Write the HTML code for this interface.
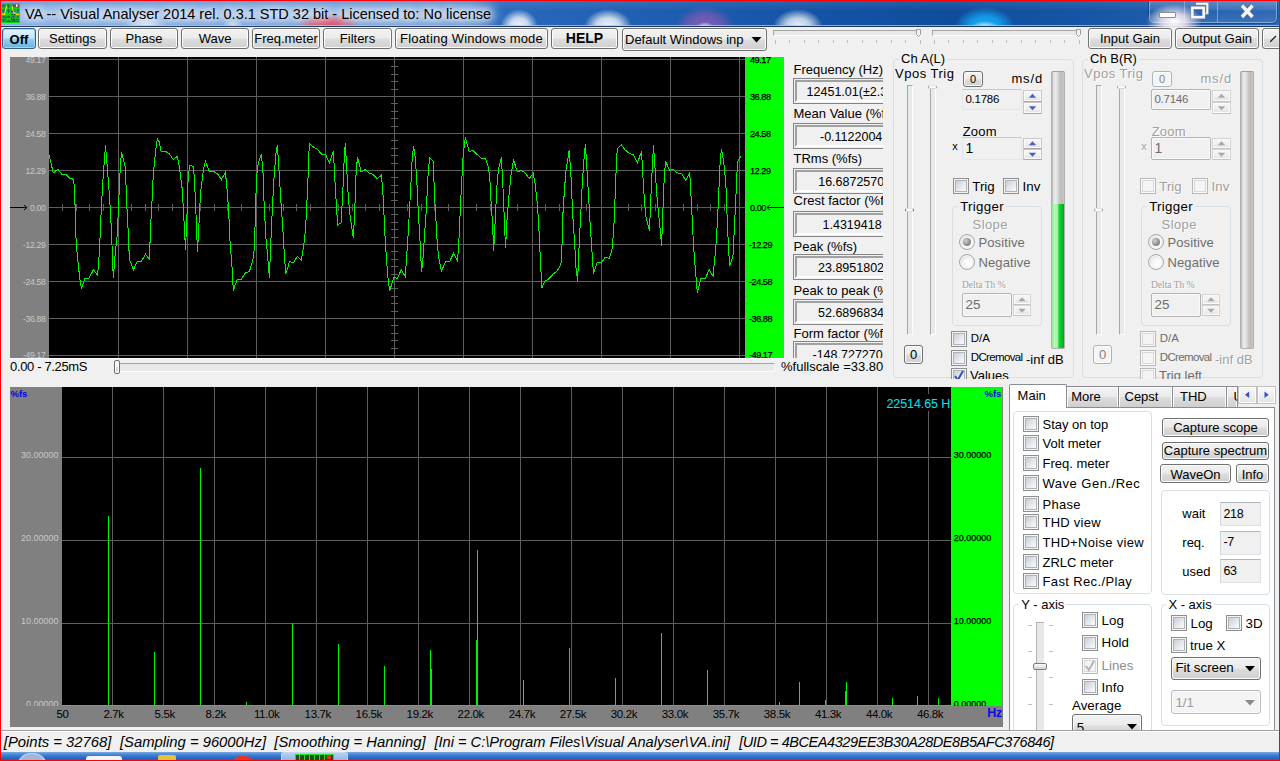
<!DOCTYPE html><html><head><meta charset="utf-8"><title>VA</title><style>
html,body{margin:0;padding:0}
body{width:1280px;height:761px;overflow:hidden;background:#f0f0f0;position:relative;font-family:"Liberation Sans",sans-serif;font-size:13px;color:#000}
div,span,svg{position:absolute;box-sizing:border-box}
.t{white-space:pre;line-height:16px;height:16px}
.btn{border:1px solid #707070;border-radius:3px;background:linear-gradient(#f2f2f2 0%,#ebebeb 48%,#dddddd 52%,#cfcfcf 100%);box-shadow:inset 0 0 0 1px #fcfcfc;text-align:center;white-space:pre}
.grp{border:1px solid #d5dfe5;border-radius:4px}
.cb{width:16px;height:16px;border:1px solid #8e8f8f;background:linear-gradient(135deg,#c9ced6 15%,#e4e7ea 50%,#fafafa 85%);box-shadow:inset 0 0 0 1px #f4f4f4, inset 0 0 0 2px #aeb3b9}
.cb.dis{border-color:#b8b8b8;box-shadow:inset 0 0 0 1px #f8f8f8, inset 0 0 0 2px #d8d8d8;background:#f4f4f4}
.rb{width:16px;height:16px;border:1px solid #a8a8a8;border-radius:50%;background:radial-gradient(circle at 60% 60%,#ffffff 0,#f4f4f4 45%,#dcdcdc 75%,#c8c8c8 100%);box-shadow:inset 0 0 0 1px #f4f4f4}
.emb{color:#a0a0a0;text-shadow:1px 1px 0 #fff}
.dk{color:#6d6d6d}
.inp3{border:1px solid #dde1e8;border-top-color:#b0b5be;border-left-color:#d0d4dc;background:#f0f0f0}
.inpd{border:1px solid #b4b4b4;border-radius:2px;background:#f0f0f0;box-shadow:inset 0 0 0 1px #fafafa}
.inp{border:1px solid #abadb3;background:#fff;border-color:#abadb3 #dbdfe6 #e3e9ef #e2e3ea}
.dis{color:#8c8c8c}
.inp2{border:1px solid #e2e6ec;border-top-color:#c4c8d0;border-radius:1px;background:#f0f0f0}
.sunk{border:1px solid #858585;background:#f0f0f0;overflow:hidden}
.sunk i{position:absolute;left:1px;top:1px;right:1px;bottom:1px;border:2px solid;border-color:#a0a0a0 #fff #fff #a0a0a0}
</style></head><body>
<div style="left:0;top:0;width:1280px;height:27px;overflow:hidden;background:
linear-gradient(rgba(255,255,255,.10) 0,rgba(255,255,255,0) 40%),
linear-gradient(90deg,#4580cc 0px,#3a76c6 400px,#2867ba 520px,#1f5eb0 650px,#1554a6 800px,#0f4c9c 950px,#1655a5 1080px,#2a66b4 1280px)">
<div style="left:-20px;top:7px;width:515px;height:15px;background:#fff;opacity:.55;filter:blur(6px);border-radius:9px"></div>
<div style="left:-20px;top:2px;width:500px;height:30px;background:#cfe0f8;opacity:.38;filter:blur(9px)"></div>
<div style="left:0;top:0;width:1280px;height:27px;background:
radial-gradient(ellipse 22px 12px at 146px 27px,rgba(255,255,255,.9),rgba(255,255,255,0) 100%),
radial-gradient(ellipse 10px 9px at 233px 27px,rgba(255,255,255,.8),rgba(255,255,255,0) 100%),
radial-gradient(ellipse 34px 15px at 328px 28px,rgba(240,70,80,.95),rgba(240,80,90,.7) 50%,rgba(240,70,80,0) 100%),
radial-gradient(ellipse 19px 18px at 519px 27px,rgba(255,255,255,.95),rgba(255,255,255,.75) 50%,rgba(255,255,255,0) 100%),
radial-gradient(ellipse 24px 18px at 608px 27px,rgba(255,255,255,.95),rgba(255,255,255,.75) 50%,rgba(255,255,255,0) 100%),
radial-gradient(ellipse 9px 5px at 705px 27px,rgba(255,255,255,.9),rgba(255,255,255,0) 100%),
radial-gradient(ellipse 30px 21px at 705px 27px,rgba(130,95,185,.95),rgba(120,90,180,.8) 55%,rgba(110,90,175,0) 100%),
radial-gradient(ellipse 25px 18px at 798px 27px,rgba(255,255,255,.95),rgba(255,255,255,.7) 50%,rgba(255,255,255,0) 100%),
radial-gradient(ellipse 14px 6px at 985px 27px,rgba(255,255,255,.9),rgba(255,255,255,0) 100%),
radial-gradient(ellipse 30px 19px at 985px 26px,rgba(20,170,245,1),rgba(20,170,245,.8) 50%,rgba(20,170,245,0) 100%)"></div>
</div>
<div style="left:0;top:25px;width:1280px;height:1px;background:rgba(170,200,240,.75)"></div>
<div style="left:0;top:26px;width:1280px;height:1px;background:#1c3a66"></div>
<svg style="left:1px;top:3px" width="19" height="20" viewBox="0 0 19 20">
<rect x="0" y="0" width="19" height="20" fill="#00e000"/>
<g fill="#5a78dc"><rect x="1.2" y="1.2" width="3.4" height="3.4"/><rect x="1.2" y="5.8" width="3.4" height="4.0"/><rect x="1.2" y="12.6" width="3.4" height="2.6"/><rect x="1.2" y="17.0" width="3.4" height="1.6"/><rect x="5.8" y="1.2" width="3.6" height="3.4"/><rect x="5.8" y="5.8" width="3.6" height="4.0"/><rect x="5.8" y="12.6" width="3.6" height="2.6"/><rect x="5.8" y="17.0" width="3.6" height="1.6"/><rect x="10.8" y="1.2" width="3.6" height="3.4"/><rect x="10.8" y="5.8" width="3.6" height="4.0"/><rect x="10.8" y="12.6" width="3.6" height="2.6"/><rect x="10.8" y="17.0" width="3.6" height="1.6"/><rect x="15.6" y="1.2" width="2.4" height="3.4"/><rect x="15.6" y="5.8" width="2.4" height="4.0"/><rect x="15.6" y="12.6" width="2.4" height="2.6"/><rect x="15.6" y="17.0" width="2.4" height="1.6"/></g>
<g stroke="#0a7a1a" stroke-width=".9"><path d="M2.9 1.2V4.6M1.2 2.9H4.6"/><path d="M2.9 5.8V9.8M1.2 7.8H4.6"/><path d="M2.9 12.6V15.2M1.2 13.9H4.6"/><path d="M2.9 17.0V18.6M1.2 17.8H4.6"/><path d="M7.6 1.2V4.6M5.8 2.9H9.4"/><path d="M7.6 5.8V9.8M5.8 7.8H9.4"/><path d="M7.6 12.6V15.2M5.8 13.9H9.4"/><path d="M7.6 17.0V18.6M5.8 17.8H9.4"/><path d="M12.6 1.2V4.6M10.8 2.9H14.4"/><path d="M12.6 5.8V9.8M10.8 7.8H14.4"/><path d="M12.6 12.6V15.2M10.8 13.9H14.4"/><path d="M12.6 17.0V18.6M10.8 17.8H14.4"/><path d="M16.8 1.2V4.6M15.6 2.9H18.0"/><path d="M16.8 5.8V9.8M15.6 7.8H18.0"/><path d="M16.8 12.6V15.2M15.6 13.9H18.0"/><path d="M16.8 17.0V18.6M15.6 17.8H18.0"/></g>
<path d="M0.5 11.4H3.6L4.6 7L5.6 3M11.4 3L11.8 7.2L12.8 9.6L15 11.4H18" stroke="#f0e400" stroke-width="1.1" fill="none"/>
<path d="M4 14.5H8.6M0.5 16.4H5M5.2 18.5H17.8" stroke="#e81010" stroke-width="1" fill="none"/><rect x="10" y="13.8" width="1.2" height="2.6" fill="#e81010"/>
<path d="M10 16.4H17.6" stroke="#101010" stroke-width="1" stroke-dasharray="1.4 1"/><rect x="10.4" y="8" width="1.2" height="1.2" fill="#101010"/><rect x="10.4" y="11" width="1.2" height="1.2" fill="#101010"/><rect x="13.2" y="11" width="1.2" height="1.2" fill="#101010"/>
<rect x="14.2" y="1.6" width="3.4" height="2.8" fill="#e81010"/><rect x="15" y="1.4" width="1.6" height="2.4" fill="#fff"/>
</svg>
<span class="t" style="left:25px;top:4.5px;font-size:14.5px;line-height:18px;height:18px;text-shadow:0 0 6px rgba(255,255,255,.9),0 0 10px rgba(255,255,255,.7),0 0 14px rgba(255,255,255,.5)">VA -- Visual Analyser 2014 rel. 0.3.1 STD 32 bit - Licensed to: No license</span>
<div style="left:1149px;top:0;width:128px;height:23px;border:1px solid rgba(170,200,240,.6);border-top:none;border-radius:0 0 5px 5px;background:linear-gradient(rgba(255,255,255,.20),rgba(255,255,255,.10) 45%,rgba(255,255,255,.02) 50%,rgba(255,255,255,.10));box-shadow:0 0 0 1px rgba(10,40,90,.45)"></div>
<div style="left:1184px;top:1px;width:1px;height:21px;background:rgba(170,200,240,.55)"></div>
<div style="left:1217px;top:1px;width:1px;height:21px;background:rgba(170,200,240,.55)"></div>
<div style="left:1143px;top:3px;width:66px;height:25px;overflow:hidden"><div style="left:3px;top:1px;width:56px;height:34px;background:radial-gradient(ellipse 28px 17px at 28px 17px,rgba(255,255,255,1),rgba(255,238,240,.8) 45%,rgba(255,255,255,0) 100%)"></div></div>
<div style="left:1159px;top:12px;width:17px;height:6px;background:#fff;border:1px solid #8a8f98;border-radius:1px"></div>
<svg style="left:1188px;top:1px" width="26" height="20" viewBox="0 0 26 20"><path d="M8 2.7H19.3V12.3H17" fill="none" stroke="#c8cdd6" stroke-width="2.4"/><path d="M8 2.7H19.3V12.3" fill="none" stroke="#f4f6fa" stroke-width="1.6"/><rect x="4.3" y="6.8" width="11.4" height="9.4" fill="none" stroke="#8a94a6" stroke-width="3.4"/><rect x="4.3" y="6.8" width="11.4" height="9.4" fill="none" stroke="#f6f8fb" stroke-width="2.4"/></svg>
<svg style="left:1238px;top:2px" width="20" height="18"><path d="M4 3.5L14.5 15M14.5 3.5L4 15" stroke="#5a6a84" stroke-width="5" fill="none"/><path d="M4 3.5L14.5 15M14.5 3.5L4 15" stroke="#f4f6fa" stroke-width="3.4" fill="none"/></svg>
<div style="left:1px;top:27px;width:1278px;height:26px;background:#f0f0f0"></div>
<div class="btn" style="left:2px;top:28px;width:34px;height:21px;line-height:19px;font-size:13px;font-weight:bold;border-color:#2c628b;background:linear-gradient(#e5f4fc 0%,#c4e5f6 48%,#98d1ef 52%,#68b3db 100%);box-shadow:inset 0 0 0 1px #9fd8f3;font-size:13px;line-height:21px;">Off</div>
<div class="btn" style="left:38px;top:28px;width:69px;height:21px;line-height:19px;font-size:13px;">Settings</div>
<div class="btn" style="left:110px;top:28px;width:68px;height:21px;line-height:19px;font-size:13px;">Phase</div>
<div class="btn" style="left:181px;top:28px;width:68px;height:21px;line-height:19px;font-size:13px;">Wave</div>
<div class="btn" style="left:252px;top:28px;width:68px;height:21px;line-height:19px;font-size:13px;">Freq.meter</div>
<div class="btn" style="left:323px;top:28px;width:69px;height:21px;line-height:19px;font-size:13px;">Filters</div>
<div class="btn" style="left:395px;top:28px;width:153px;height:21px;line-height:19px;font-size:13px;letter-spacing:.2px;">Floating Windows mode</div>
<div class="btn" style="left:551px;top:28px;width:67px;height:21px;line-height:19px;font-size:13px;font-weight:bold;font-size:14px;">HELP</div>
<div class="btn" style="left:622px;top:28px;width:145px;height:23px;text-align:left;line-height:21px;padding-left:2px;overflow:hidden">Default Windows inp</div>
<div style="left:744px;top:30px;width:20px;height:19px;background:linear-gradient(#f0f0f0 0%,#ebebeb 48%,#dddddd 52%,#d0d0d0 100%)"></div>
<svg style="left:751px;top:37px" width="11" height="6"><path d="M0.5 0H10.5L5.5 5.5Z" fill="#000"/></svg>
<div style="left:773px;top:30px;width:148px;height:6px;border:1px solid #a6a6a6;border-bottom-color:#fdfdfd;border-right-color:#fdfdfd;background:#e7eaea"></div>
<div style="left:775px;top:40px;width:1px;height:4px;background:#bdbdbd"></div>
<div style="left:789px;top:40px;width:1px;height:3px;background:#bdbdbd"></div>
<div style="left:804px;top:40px;width:1px;height:3px;background:#bdbdbd"></div>
<div style="left:818px;top:40px;width:1px;height:3px;background:#bdbdbd"></div>
<div style="left:833px;top:40px;width:1px;height:3px;background:#bdbdbd"></div>
<div style="left:847px;top:40px;width:1px;height:3px;background:#bdbdbd"></div>
<div style="left:862px;top:40px;width:1px;height:3px;background:#bdbdbd"></div>
<div style="left:876px;top:40px;width:1px;height:3px;background:#bdbdbd"></div>
<div style="left:891px;top:40px;width:1px;height:3px;background:#bdbdbd"></div>
<div style="left:905px;top:40px;width:1px;height:3px;background:#bdbdbd"></div>
<div style="left:920px;top:40px;width:1px;height:4px;background:#bdbdbd"></div>
<svg style="left:916px;top:29px" width="5" height="8"><path d="M0.5 0.5H4.5V5.5L2.5 7.5L0.5 5.5Z" fill="#f4f4f4" stroke="#9a9a9a"/></svg>
<div style="left:932px;top:30px;width:148px;height:6px;border:1px solid #a6a6a6;border-bottom-color:#fdfdfd;border-right-color:#fdfdfd;background:#e7eaea"></div>
<div style="left:934px;top:40px;width:1px;height:4px;background:#bdbdbd"></div>
<div style="left:948px;top:40px;width:1px;height:3px;background:#bdbdbd"></div>
<div style="left:963px;top:40px;width:1px;height:3px;background:#bdbdbd"></div>
<div style="left:977px;top:40px;width:1px;height:3px;background:#bdbdbd"></div>
<div style="left:992px;top:40px;width:1px;height:3px;background:#bdbdbd"></div>
<div style="left:1006px;top:40px;width:1px;height:3px;background:#bdbdbd"></div>
<div style="left:1021px;top:40px;width:1px;height:3px;background:#bdbdbd"></div>
<div style="left:1035px;top:40px;width:1px;height:3px;background:#bdbdbd"></div>
<div style="left:1050px;top:40px;width:1px;height:3px;background:#bdbdbd"></div>
<div style="left:1064px;top:40px;width:1px;height:3px;background:#bdbdbd"></div>
<div style="left:1079px;top:40px;width:1px;height:4px;background:#bdbdbd"></div>
<svg style="left:1076px;top:29px" width="5" height="8"><path d="M0.5 0.5H4.5V5.5L2.5 7.5L0.5 5.5Z" fill="#f4f4f4" stroke="#9a9a9a"/></svg>
<div class="btn" style="left:1088px;top:28px;width:84px;height:21px;line-height:19px;font-size:13px;">Input Gain</div>
<div class="btn" style="left:1175px;top:28px;width:84px;height:21px;line-height:19px;font-size:13px;">Output Gain</div>
<div class="btn" style="left:1262px;top:28px;width:28px;height:21px;line-height:19px;font-size:13px;"></div>
<svg style="left:1270px;top:34px" width="10" height="10"><path d="M0 8L6 2" stroke="#222" stroke-width="1.3"/></svg>
<svg style="left:0;top:0" width="1280" height="400" viewBox="0 0 1280 400">
<rect x="10" y="57" width="39" height="301" fill="#808080"/>
<rect x="49" y="57" width="696" height="301" fill="#000"/>
<rect x="745" y="57" width="39" height="301" fill="#00ff00"/>
<g shape-rendering="crispEdges" stroke="#5e5e5e" stroke-width="1" fill="none">
<path d="M49 59.5H745M49 96.5H745M49 133.5H745M49 170.5H745M49 207.5H745M49 244.5H745M49 281.5H745M49 318.5H745M49 355.5H745M118.5 57V358M187.5 57V358M256.5 57V358M325.5 57V358M394.5 57V358M463.5 57V358M532.5 57V358M601.5 57V358M670.5 57V358M739.5 57V358M62.5 204V211M76.5 204V211M89.5 204V211M103.5 204V211M118.5 204V211M131.5 204V211M145.5 204V211M158.5 204V211M172.5 204V211M187.5 204V211M200.5 204V211M214.5 204V211M227.5 204V211M241.5 204V211M256.5 204V211M269.5 204V211M283.5 204V211M296.5 204V211M310.5 204V211M325.5 204V211M338.5 204V211M352.5 204V211M365.5 204V211M379.5 204V211M394.5 204V211M407.5 204V211M421.5 204V211M434.5 204V211M448.5 204V211M463.5 204V211M476.5 204V211M490.5 204V211M503.5 204V211M517.5 204V211M532.5 204V211M545.5 204V211M559.5 204V211M572.5 204V211M586.5 204V211M601.5 204V211M614.5 204V211M628.5 204V211M641.5 204V211M655.5 204V211M670.5 204V211M683.5 204V211M697.5 204V211M710.5 204V211M724.5 204V211M739.5 204V211M391 59.5H398M391 66.5H398M391 74.5H398M391 81.5H398M391 89.5H398M391 96.5H398M391 103.5H398M391 111.5H398M391 118.5H398M391 126.5H398M391 133.5H398M391 140.5H398M391 148.5H398M391 155.5H398M391 163.5H398M391 170.5H398M391 177.5H398M391 185.5H398M391 192.5H398M391 200.5H398M391 207.5H398M391 214.5H398M391 222.5H398M391 229.5H398M391 237.5H398M391 244.5H398M391 251.5H398M391 259.5H398M391 266.5H398M391 274.5H398M391 281.5H398M391 288.5H398M391 296.5H398M391 303.5H398M391 311.5H398M391 318.5H398M391 325.5H398M391 333.5H398M391 340.5H398M391 348.5H398M391 355.5H398"/></g>
<path d="M745 59.5H748M745 66.5H748M745 74.5H748M745 81.5H748M745 89.5H748M745 96.5H748M745 103.5H748M745 111.5H748M745 118.5H748M745 126.5H748M745 133.5H748M745 140.5H748M745 148.5H748M745 155.5H748M745 163.5H748M745 170.5H748M745 177.5H748M745 185.5H748M745 192.5H748M745 200.5H748M745 207.5H748M745 214.5H748M745 222.5H748M745 229.5H748M745 237.5H748M745 244.5H748M745 251.5H748M745 259.5H748M745 266.5H748M745 274.5H748M745 281.5H748M745 288.5H748M745 296.5H748M745 303.5H748M745 311.5H748M745 318.5H748M745 325.5H748M745 333.5H748M745 340.5H748M745 348.5H748M745 355.5H748" stroke="#70a070" shape-rendering="crispEdges" fill="none"/>
<polyline shape-rendering="crispEdges" fill="none" stroke="#00f400" stroke-width="1" points="49.0,154.7 53.3,173.0 57.7,169.2 61.7,174.1 65.8,174.1 69.6,178.1 73.4,179.3 74.7,189.8 75.6,232.2 77.4,256.8 79.6,276.9 81.4,288.5 85.2,278.0 89.0,278.0 93.5,269.7 97.5,275.1 98.6,263.5 99.7,245.6 100.8,218.8 102.6,185.3 103.7,169.7 105.5,145.1 107.1,165.2 109.8,200.9 111.5,232.2 113.3,278.0 115.3,252.3 116.9,238.9 118.2,214.3 119.8,176.4 121.4,152.2 123.2,158.5 125.4,167.4 126.5,198.7 128.1,230.0 129.4,259.0 133.4,269.7 137.5,261.2 141.5,261.2 145.5,254.1 149.5,259.4 150.4,230.0 151.7,207.6 153.3,174.1 155.3,154.0 157.3,138.4 159.1,141.7 161.1,151.4 165.6,151.4 169.4,154.0 173.4,159.6 177.4,156.3 179.0,165.2 180.6,176.4 182.3,189.8 183.9,218.8 185.5,249.6 187.0,214.3 187.9,183.1 189.5,165.2 193.5,166.3 194.6,183.1 196.0,214.3 197.5,251.8 199.1,221.0 200.6,192.0 203.1,171.9 205.3,161.2 209.4,171.4 213.6,171.4 217.4,173.7 221.4,179.7 221.8,178.6 225.4,172.3 226.7,185.3 228.5,207.6 230.0,241.1 231.8,263.5 233.4,291.4 235.2,284.7 237.4,279.1 241.4,279.1 245.5,272.8 249.5,271.3 253.1,259.0 254.6,245.6 255.3,214.3 256.4,180.8 257.5,166.3 261.3,154.0 262.9,169.7 264.2,205.4 265.8,236.7 267.3,252.3 269.4,277.5 270.9,241.1 272.5,205.4 274.0,178.6 275.8,154.0 277.4,145.1 279.0,169.7 280.7,198.7 282.5,223.3 284.1,250.1 285.7,274.2 289.7,261.2 293.2,263.0 297.3,256.3 301.3,260.1 303.7,245.6 305.5,230.0 307.1,198.7 308.2,174.1 309.3,143.3 313.3,146.9 317.1,149.1 321.4,154.0 325.4,154.0 329.4,163.0 333.4,151.4 334.8,178.6 336.1,200.9 337.7,225.0 341.0,222.8 342.8,192.0 344.2,158.5 345.3,143.3 346.8,169.7 348.4,198.7 350.2,216.6 351.8,227.7 353.3,237.8 354.7,212.1 356.2,169.7 357.6,157.4 361.1,171.9 365.2,169.7 369.2,173.0 373.2,174.6 377.2,179.0 381.2,175.2 382.6,187.5 383.7,207.6 384.8,232.2 386.4,259.0 387.9,276.9 389.7,291.4 391.5,284.7 393.7,277.3 397.2,278.6 401.3,269.7 405.3,276.9 406.6,256.8 408.0,236.7 409.5,209.9 411.1,180.8 412.2,158.5 413.5,146.2 415.1,156.3 416.7,178.6 418.2,209.9 420.0,241.1 421.6,272.4 423.1,256.8 424.7,232.2 426.3,209.9 428.1,174.1 429.6,157.4 433.4,161.4 434.3,192.0 435.9,218.8 437.4,245.6 439.0,259.0 441.4,271.3 445.5,261.7 449.5,261.7 453.5,253.4 457.5,261.2 458.9,241.1 460.2,212.1 461.5,185.3 463.1,156.3 465.3,137.3 467.1,144.0 469.1,151.4 473.2,150.7 477.2,154.5 481.6,158.5 485.4,158.5 488.1,166.3 489.7,176.4 491.0,200.9 492.4,221.0 493.7,250.5 495.3,218.8 496.8,187.5 498.4,169.7 501.3,157.4 502.6,178.6 504.0,212.1 505.5,248.3 507.1,218.8 508.7,198.7 511.1,174.1 513.6,159.6 517.2,171.9 521.2,170.3 525.2,173.0 529.2,178.6 533.2,173.5 535.0,183.1 536.8,198.7 538.4,218.8 539.7,245.6 540.8,267.9 541.9,288.0 544.6,281.3 549.1,278.6 553.1,274.2 556.9,271.3 560.9,264.6 562.0,245.6 562.9,214.3 564.3,192.0 565.8,171.9 569.2,150.0 571.1,178.6 572.7,214.3 574.5,241.1 576.0,267.9 577.6,280.9 578.9,250.1 580.5,218.8 582.1,187.5 583.8,160.7 585.4,144.4 587.0,169.7 588.8,200.9 590.5,230.0 591.9,250.1 593.4,273.5 597.2,262.3 601.3,263.0 605.3,257.2 609.3,258.5 612.4,247.8 614.0,223.3 615.3,192.0 616.4,163.0 617.3,148.4 621.4,145.1 625.4,150.2 629.4,153.4 633.4,154.7 637.4,163.0 641.5,151.4 642.8,174.1 644.4,200.9 645.9,216.6 649.5,231.1 650.8,198.7 652.2,169.7 653.5,145.1 655.1,169.7 656.6,192.0 658.2,209.9 659.8,225.5 661.6,245.6 663.1,205.4 664.2,178.6 665.6,161.2 669.4,170.3 673.4,169.7 677.6,173.0 681.7,173.5 685.7,180.4 689.7,172.3 690.8,192.0 692.2,218.8 693.5,245.6 695.1,265.7 697.3,292.5 701.1,278.0 705.1,279.1 709.1,269.7 713.1,276.4 714.7,259.0 716.3,241.1 717.8,214.3 719.2,183.1 720.3,158.5 721.6,149.1 724.1,165.2 725.9,185.3 727.2,218.8 728.6,250.1 729.7,266.1 733.0,255.6 734.6,223.3 735.9,196.5 737.5,161.8 740.8,156.3"/>
<clipPath id="sc"><rect x="10" y="57" width="774" height="301"/></clipPath><g clip-path="url(#sc)" font-size="8.6px" font-family="Liberation Sans, sans-serif">
<text x="45.5" y="62.5" text-anchor="end" fill="#c8c8c8" letter-spacing="-.3">49.17</text>
<text x="750" y="62.6" fill="#000" stroke="#000" stroke-width=".25" letter-spacing="-.5" font-size="9.2px">49.17</text>
<text x="45.5" y="99.5" text-anchor="end" fill="#c8c8c8" letter-spacing="-.3">36.88</text>
<text x="750" y="99.6" fill="#000" stroke="#000" stroke-width=".25" letter-spacing="-.5" font-size="9.2px">36.88</text>
<text x="45.5" y="136.5" text-anchor="end" fill="#c8c8c8" letter-spacing="-.3">24.58</text>
<text x="750" y="136.6" fill="#000" stroke="#000" stroke-width=".25" letter-spacing="-.5" font-size="9.2px">24.58</text>
<text x="45.5" y="173.5" text-anchor="end" fill="#c8c8c8" letter-spacing="-.3">12.29</text>
<text x="750" y="173.6" fill="#000" stroke="#000" stroke-width=".25" letter-spacing="-.5" font-size="9.2px">12.29</text>
<text x="45.5" y="210.5" text-anchor="end" fill="#c8c8c8" letter-spacing="-.3">0.00</text>
<text x="750" y="210.6" fill="#000" stroke="#000" stroke-width=".25" letter-spacing="-.5" font-size="9.2px">0.00</text>
<text x="45.5" y="247.5" text-anchor="end" fill="#c8c8c8" letter-spacing="-.3">-12.29</text>
<text x="749" y="247.6" fill="#000" stroke="#000" stroke-width=".25" letter-spacing="-.5" font-size="9.2px">-12.29</text>
<text x="45.5" y="284.5" text-anchor="end" fill="#c8c8c8" letter-spacing="-.3">-24.58</text>
<text x="749" y="284.6" fill="#000" stroke="#000" stroke-width=".25" letter-spacing="-.5" font-size="9.2px">-24.58</text>
<text x="45.5" y="321.5" text-anchor="end" fill="#c8c8c8" letter-spacing="-.3">-36.88</text>
<text x="749" y="321.6" fill="#000" stroke="#000" stroke-width=".25" letter-spacing="-.5" font-size="9.2px">-36.88</text>
<text x="45.5" y="358.0" text-anchor="end" fill="#c8c8c8" letter-spacing="-.3">-49.17</text>
<text x="749" y="358.1" fill="#000" stroke="#000" stroke-width=".25" letter-spacing="-.5" font-size="9.2px">-49.17</text>
</g>
<path d="M10 207.5H27M24 205L27 207.5L24 210" stroke="#000" fill="none" stroke-width="1"/>
<path d="M784 207.5H767M770 205L767 207.5L770 210" stroke="#000" fill="none" stroke-width="1"/>
</svg>
<span class="t" style="left:10px;top:358.5px;font-size:13px;letter-spacing:-.35px">0.00 - 7.25mS</span>
<div style="left:115px;top:363px;width:660px;height:9px;border:1px solid #a6a6a6;border-bottom-color:#fdfdfd;border-right-color:#fdfdfd;background:#e7eaea"></div>
<div style="left:114px;top:360px;width:6px;height:14px;border:1px solid #6e6e6e;border-radius:2px;background:linear-gradient(#ffffff 0,#f2f2f2 45%,#d8d8d8 55%,#e4e4e4 100%);box-shadow:inset 0 0 0 1px #fcfcfc"></div>
<div style="left:10px;top:358px;width:774px;height:1px;background:#fcfcfc"></div>
<span class="t" style="left:781px;top:359px;font-size:13px">%fullscale =33.80</span>
<div style="left:785px;top:57px;width:98px;height:301px;overflow:hidden">
<span class="t" style="left:8.5px;top:4.5px">Frequency (Hz)</span>
<div class="sunk" style="left:8px;top:21px;width:130px;height:26px"><i></i><span class="t" style="left:12.600000000000023px;top:5px;font-size:12.5px">12451.01(±2.3</span></div>
<span class="t" style="left:8.5px;top:49px">Mean Value (%fs)</span>
<div class="sunk" style="left:8px;top:66px;width:130px;height:26px"><i></i><span class="t" style="left:26px;top:5px;font-size:12.5px">-0.1122004</span></div>
<span class="t" style="left:8.5px;top:94px">TRms (%fs)</span>
<div class="sunk" style="left:8px;top:111px;width:130px;height:26px"><i></i><span class="t" style="left:24.200000000000045px;top:5px;font-size:12.5px">16.6872570</span></div>
<span class="t" style="left:8.5px;top:136px">Crest factor (%fs)</span>
<div class="sunk" style="left:8px;top:154px;width:130px;height:26px"><i></i><span class="t" style="left:28.5px;top:5px;font-size:12.5px">1.4319418</span></div>
<span class="t" style="left:8.5px;top:182px">Peak (%fs)</span>
<div class="sunk" style="left:8px;top:197px;width:130px;height:26px"><i></i><span class="t" style="left:24px;top:5px;font-size:12.5px">23.8951802</span></div>
<span class="t" style="left:8.5px;top:226px">Peak to peak (%fs)</span>
<div class="sunk" style="left:8px;top:241.5px;width:130px;height:26px"><i></i><span class="t" style="left:24px;top:5px;font-size:12.5px">52.6896834</span></div>
<span class="t" style="left:8.5px;top:269px">Form factor (%fs)</span>
<div class="sunk" style="left:8px;top:284px;width:130px;height:26px"><i></i><span class="t" style="left:18.5px;top:5px;font-size:12.5px">-148.727270</span></div>
</div>
<div class="grp" style="left:893px;top:59px;width:181px;height:319px"></div>
<span class="t " style="left:899.0px;top:51px;font-size:13px;background:#f0f0f0;padding:0 2px;">Ch A(L)</span>
<span class="t " style="left:895.0px;top:66px;font-size:13px;letter-spacing:.5px;">Vpos Trig</span>
<div style="left:907px;top:85px;width:6px;height:250px;border:1px solid #a8a8a8;border-right-color:#fdfdfd;border-bottom-color:#fdfdfd;background:#e7eaea"></div>
<div style="left:905px;top:208px;width:9px;height:4px;border-left:1px solid #666;border-right:1px solid #666;border-top:1px solid #e4e4e4;border-bottom:1px solid #d8d8d8;border-radius:2px;background:#fbfbfb"></div>
<div style="left:930px;top:85px;width:6px;height:250px;border:1px solid #a8a8a8;border-right-color:#fdfdfd;border-bottom-color:#fdfdfd;background:#e7eaea"></div>
<div style="left:928px;top:85px;width:9px;height:4px;border-left:1px solid #9aa0a4;border-right:1px solid #9aa0a4;border-top:1px solid #e4e4e4;border-bottom:1px solid #d8d8d8;border-radius:2px;background:#fbfbfb"></div>
<div class="btn" style="left:904px;top:345px;width:19px;height:19px;line-height:17px;font-size:13px;font-size:13px;">0</div>
<div class="btn" style="left:963px;top:71px;width:20px;height:16px;line-height:14px;font-size:13px;font-size:11px;">0</div>
<span class="t " style="left:1011.4px;top:71px;font-size:13px;letter-spacing:.9px;">ms/d</span>
<div class="inp2" style="left:962px;top:89px;width:60px;height:21px"></div>
<span class="t " style="left:965.4px;top:91px;font-size:11.5px;letter-spacing:-.25px;">0.1786</span>
<div style="left:1023px;top:90px;width:19px;height:12px;border:1px solid #c8c8c8;border-bottom-color:#a8a8a8;background:linear-gradient(#f6f6f6 0,#f0f0f0 50%,#e2e2e2 100%);box-shadow:inset 0 0 0 1px #fafafa"></div>
<svg style="left:0;top:0" width="1280" height="400"><path d="M1028.8 97.8H1036.2L1032.5 93.8Z" fill="#4a62b4"/></svg>
<div style="left:1023px;top:102px;width:19px;height:12px;border:1px solid #c8c8c8;border-bottom-color:#a8a8a8;background:linear-gradient(#f6f6f6 0,#f0f0f0 50%,#e2e2e2 100%);box-shadow:inset 0 0 0 1px #fafafa"></div>
<svg style="left:0;top:0" width="1280" height="400"><path d="M1028.8 106.2H1036.2L1032.5 110.2Z" fill="#4a62b4"/></svg>
<span class="t " style="left:962.7px;top:124px;font-size:13px;letter-spacing:.2px;">Zoom</span>
<span class="t " style="left:952.2px;top:138px;font-size:11px;">x</span>
<div class="inp2" style="left:962px;top:137px;width:60px;height:23px"></div>
<span class="t " style="left:965.5px;top:140px;font-size:14px;">1</span>
<div style="left:1023px;top:138px;width:19px;height:11px;border:1px solid #c8c8c8;border-bottom-color:#a8a8a8;background:linear-gradient(#f6f6f6 0,#f0f0f0 50%,#e2e2e2 100%);box-shadow:inset 0 0 0 1px #fafafa"></div>
<svg style="left:0;top:0" width="1280" height="400"><path d="M1028.8 145.3H1036.2L1032.5 141.3Z" fill="#4a62b4"/></svg>
<div style="left:1023px;top:149px;width:19px;height:11px;border:1px solid #c8c8c8;border-bottom-color:#a8a8a8;background:linear-gradient(#f6f6f6 0,#f0f0f0 50%,#e2e2e2 100%);box-shadow:inset 0 0 0 1px #fafafa"></div>
<svg style="left:0;top:0" width="1280" height="400"><path d="M1028.8 152.7H1036.2L1032.5 156.7Z" fill="#4a62b4"/></svg>
<div class="cb " style="left:953px;top:178px"></div>
<span class="t " style="left:972.3px;top:179px;font-size:13.3px;">Trig</span>
<div class="cb " style="left:1003px;top:178px"></div>
<span class="t " style="left:1022.6px;top:179px;font-size:13.3px;">Inv</span>
<div class="grp" style="left:952px;top:206px;width:90px;height:120px"></div>
<span class="t " style="left:958.2px;top:199px;font-size:13.3px;background:#f0f0f0;padding:0 2px;letter-spacing:.3px;">Trigger</span>
<span class="t emb" style="left:972.6px;top:217px;font-size:13px;letter-spacing:.4px;">Slope</span>
<div class="rb" style="left:959px;top:234px"></div><div style="left:963px;top:238px;width:8px;height:8px;border-radius:50%;background:radial-gradient(circle at 35% 35%,#d0d0d0,#8c8c8c 60%,#7a7a7a)"></div>
<span class="t dk" style="left:978.5px;top:235px;font-size:13px;letter-spacing:.1px;">Positive</span>
<div class="rb" style="left:959px;top:254px"></div>
<span class="t dk" style="left:978.5px;top:255px;font-size:13px;letter-spacing:.1px;">Negative</span>
<span class="t emb" style="left:962.0px;top:277px;font-size:9.5px;font-family:'Liberation Serif',serif;">Delta Th %</span>
<div class="inpd" style="left:962px;top:293px;width:50px;height:24px"></div>
<span class="t dk" style="left:965.6px;top:297px;font-size:13.4px;">25</span>
<div style="left:1013px;top:294px;width:18px;height:11px;border:1px solid #d4d4d4;border-bottom-color:#c4c4c4;background:linear-gradient(#f6f6f6 0,#f0f0f0 50%,#e2e2e2 100%);box-shadow:inset 0 0 0 1px #fafafa"></div>
<svg style="left:0;top:0" width="1280" height="400"><path d="M1018.3 301.3H1025.7L1022.0 297.3Z" fill="#a8a8a8"/></svg>
<div style="left:1013px;top:305px;width:18px;height:11px;border:1px solid #d4d4d4;border-bottom-color:#c4c4c4;background:linear-gradient(#f6f6f6 0,#f0f0f0 50%,#e2e2e2 100%);box-shadow:inset 0 0 0 1px #fafafa"></div>
<svg style="left:0;top:0" width="1280" height="400"><path d="M1018.3 308.7H1025.7L1022.0 312.7Z" fill="#a8a8a8"/></svg>
<div class="cb " style="left:951px;top:331px"></div>
<span class="t " style="left:970.8px;top:330px;font-size:11.5px;">D/A</span>
<div class="cb " style="left:951px;top:350px"></div>
<span class="t " style="left:970.8px;top:349px;font-size:11.5px;letter-spacing:-.65px;">DCremoval</span>
<span class="t " style="left:1026.0px;top:352px;font-size:13px;">-inf dB</span>
<div style="left:950px;top:366px;width:110px;height:13px;overflow:hidden"><div style="left:-950px;top:-366px;width:1280px;height:400px">
<div class="cb " style="left:951px;top:368px"></div>
<svg style="left:951px;top:368px" width="16" height="16"><path d="M4 8L6.8 12L12 3" stroke="#3a50b0" stroke-width="2" fill="none"/></svg>
<span class="t " style="left:970.0px;top:368px;font-size:13px;">Values</span>
</div></div>
<div style="left:1051px;top:71px;width:14px;height:278px;border-radius:2px;background:linear-gradient(90deg,#b4b4b4 0,#dedede 12%,#ececec 30%,#d8d8d8 50%,#c6c6c6 62%,#bcbcbc 80%,#c8c8c8 100%);border:1px solid #b0b0b0;border-top-color:#a0a0a0"></div>
<div style="left:1052px;top:204px;width:12px;height:144px;border-radius:0 0 1px 1px;background:linear-gradient(90deg,#8eea8e 0,#b8f6b8 20%,#a6f0a6 48%,#1cd83c 56%,#00cc28 75%,#00a41c 100%)"></div>
<div class="grp" style="left:1082px;top:59px;width:181px;height:319px"></div>
<span class="t " style="left:1088.0px;top:51px;font-size:13px;background:#f0f0f0;padding:0 2px;">Ch B(R)</span>
<span class="t emb" style="left:1084.0px;top:66px;font-size:13px;letter-spacing:.5px;">Vpos Trig</span>
<div style="left:1096px;top:85px;width:6px;height:250px;border:1px solid #a8a8a8;border-right-color:#fdfdfd;border-bottom-color:#fdfdfd;background:#e7eaea"></div>
<div style="left:1094px;top:208px;width:9px;height:4px;border-left:1px solid #9aa0a4;border-right:1px solid #9aa0a4;border-top:1px solid #e4e4e4;border-bottom:1px solid #d8d8d8;border-radius:2px;background:#fbfbfb"></div>
<div style="left:1119px;top:85px;width:6px;height:250px;border:1px solid #a8a8a8;border-right-color:#fdfdfd;border-bottom-color:#fdfdfd;background:#e7eaea"></div>
<div style="left:1117px;top:85px;width:9px;height:4px;border-left:1px solid #9aa0a4;border-right:1px solid #9aa0a4;border-top:1px solid #e4e4e4;border-bottom:1px solid #d8d8d8;border-radius:2px;background:#fbfbfb"></div>
<div class="btn" style="left:1093px;top:345px;width:19px;height:19px;line-height:17px;font-size:13px;color:#838383;border-color:#adb2b5;background:#f4f4f4;font-size:13px;">0</div>
<div class="btn" style="left:1152px;top:71px;width:20px;height:16px;line-height:14px;font-size:13px;color:#838383;border-color:#adb2b5;background:#f4f4f4;font-size:11px;">0</div>
<span class="t emb" style="left:1200.4px;top:71px;font-size:13px;letter-spacing:.9px;">ms/d</span>
<div class="inpd" style="left:1151px;top:89px;width:60px;height:21px"></div>
<span class="t dk" style="left:1154.4px;top:91px;font-size:11.5px;letter-spacing:-.25px;">0.7146</span>
<div style="left:1212px;top:90px;width:19px;height:12px;border:1px solid #d4d4d4;border-bottom-color:#c4c4c4;background:linear-gradient(#f6f6f6 0,#f0f0f0 50%,#e2e2e2 100%);box-shadow:inset 0 0 0 1px #fafafa"></div>
<svg style="left:0;top:0" width="1280" height="400"><path d="M1217.8 97.8H1225.2L1221.5 93.8Z" fill="#a8a8a8"/></svg>
<div style="left:1212px;top:102px;width:19px;height:12px;border:1px solid #d4d4d4;border-bottom-color:#c4c4c4;background:linear-gradient(#f6f6f6 0,#f0f0f0 50%,#e2e2e2 100%);box-shadow:inset 0 0 0 1px #fafafa"></div>
<svg style="left:0;top:0" width="1280" height="400"><path d="M1217.8 106.2H1225.2L1221.5 110.2Z" fill="#a8a8a8"/></svg>
<span class="t emb" style="left:1151.7px;top:124px;font-size:13px;letter-spacing:.2px;">Zoom</span>
<span class="t emb" style="left:1141.2px;top:138px;font-size:11px;">x</span>
<div class="inpd" style="left:1151px;top:137px;width:60px;height:23px"></div>
<span class="t dk" style="left:1154.5px;top:140px;font-size:14px;">1</span>
<div style="left:1212px;top:138px;width:19px;height:11px;border:1px solid #d4d4d4;border-bottom-color:#c4c4c4;background:linear-gradient(#f6f6f6 0,#f0f0f0 50%,#e2e2e2 100%);box-shadow:inset 0 0 0 1px #fafafa"></div>
<svg style="left:0;top:0" width="1280" height="400"><path d="M1217.8 145.3H1225.2L1221.5 141.3Z" fill="#a8a8a8"/></svg>
<div style="left:1212px;top:149px;width:19px;height:11px;border:1px solid #d4d4d4;border-bottom-color:#c4c4c4;background:linear-gradient(#f6f6f6 0,#f0f0f0 50%,#e2e2e2 100%);box-shadow:inset 0 0 0 1px #fafafa"></div>
<svg style="left:0;top:0" width="1280" height="400"><path d="M1217.8 152.7H1225.2L1221.5 156.7Z" fill="#a8a8a8"/></svg>
<div class="cb dis" style="left:1140px;top:178px"></div>
<span class="t emb" style="left:1159.3px;top:179px;font-size:13.3px;">Trig</span>
<div class="cb dis" style="left:1192px;top:178px"></div>
<span class="t emb" style="left:1211.6px;top:179px;font-size:13.3px;">Inv</span>
<div class="grp" style="left:1141px;top:206px;width:90px;height:120px"></div>
<span class="t " style="left:1147.2px;top:199px;font-size:13.3px;background:#f0f0f0;padding:0 2px;letter-spacing:.3px;">Trigger</span>
<span class="t emb" style="left:1161.6px;top:217px;font-size:13px;letter-spacing:.4px;">Slope</span>
<div class="rb" style="left:1148px;top:234px"></div><div style="left:1152px;top:238px;width:8px;height:8px;border-radius:50%;background:radial-gradient(circle at 35% 35%,#d0d0d0,#8c8c8c 60%,#7a7a7a)"></div>
<span class="t dk" style="left:1167.5px;top:235px;font-size:13px;letter-spacing:.1px;">Positive</span>
<div class="rb" style="left:1148px;top:254px"></div>
<span class="t dk" style="left:1167.5px;top:255px;font-size:13px;letter-spacing:.1px;">Negative</span>
<span class="t emb" style="left:1151.0px;top:277px;font-size:9.5px;font-family:'Liberation Serif',serif;">Delta Th %</span>
<div class="inpd" style="left:1151px;top:293px;width:50px;height:24px"></div>
<span class="t dk" style="left:1154.6px;top:297px;font-size:13.4px;">25</span>
<div style="left:1202px;top:294px;width:18px;height:11px;border:1px solid #d4d4d4;border-bottom-color:#c4c4c4;background:linear-gradient(#f6f6f6 0,#f0f0f0 50%,#e2e2e2 100%);box-shadow:inset 0 0 0 1px #fafafa"></div>
<svg style="left:0;top:0" width="1280" height="400"><path d="M1207.3 301.3H1214.7L1211.0 297.3Z" fill="#a8a8a8"/></svg>
<div style="left:1202px;top:305px;width:18px;height:11px;border:1px solid #d4d4d4;border-bottom-color:#c4c4c4;background:linear-gradient(#f6f6f6 0,#f0f0f0 50%,#e2e2e2 100%);box-shadow:inset 0 0 0 1px #fafafa"></div>
<svg style="left:0;top:0" width="1280" height="400"><path d="M1207.3 308.7H1214.7L1211.0 312.7Z" fill="#a8a8a8"/></svg>
<div class="cb dis" style="left:1140px;top:331px"></div>
<span class="t dk" style="left:1159.8px;top:330px;font-size:11.5px;">D/A</span>
<div class="cb dis" style="left:1140px;top:350px"></div>
<span class="t dk" style="left:1159.8px;top:349px;font-size:11.5px;letter-spacing:-.65px;">DCremoval</span>
<span class="t emb" style="left:1215.0px;top:352px;font-size:13px;">-inf dB</span>
<div style="left:1139px;top:366px;width:110px;height:13px;overflow:hidden"><div style="left:-1139px;top:-366px;width:1280px;height:400px">
<div class="cb dis" style="left:1140px;top:368px"></div>
<span class="t dk" style="left:1159.0px;top:368px;font-size:13px;">Trig left</span>
</div></div>
<div style="left:1240px;top:71px;width:14px;height:278px;border-radius:2px;background:linear-gradient(90deg,#b4b4b4 0,#dedede 12%,#ececec 30%,#d8d8d8 50%,#c6c6c6 62%,#bcbcbc 80%,#c8c8c8 100%);border:1px solid #b0b0b0;border-top-color:#a0a0a0"></div>
<svg style="left:0;top:0" width="1280" height="761" viewBox="0 0 1280 761">
<rect x="10" y="387" width="993" height="340" fill="#808080"/>
<rect x="62" y="387" width="889" height="319" fill="#000"/>
<rect x="951" y="387" width="51" height="319" fill="#00ff00"/>
<path d="M112.5 387V705M163.5 387V705M214.5 387V705M265.5 387V705M316.5 387V705M367.5 387V705M418.5 387V705M469.5 387V705M520.5 387V705M571.5 387V705M622.5 387V705M673.5 387V705M724.5 387V705M775.5 387V705M826.5 387V705M877.5 387V705M928.5 387V705M62 457.5H951M62 540.5H951M62 623.5H951" stroke="#5e5e5e" shape-rendering="crispEdges" fill="none"/>
<path d="M62 705.5H951M108.5 706V516M154.5 706V652M200.5 706V468M246.5 706V702M292.5 706V623M338.5 706V644M384.5 706V666M430.5 706V650M431.5 706V669M476.5 706V640M477.5 706V550M523.5 706V680M569.5 706V648M615.5 706V678M661.5 706V633M707.5 706V670M779.5 706V702M799.5 706V682M825.5 706V700M845.5 706V691M846.5 706V682M892.5 706V698M917.5 706V696M938.5 706V698" stroke="#00f400" shape-rendering="crispEdges" fill="none"/>
<g font-family="Liberation Sans, sans-serif">
<clipPath id="sp"><rect x="10" y="387" width="993" height="319"/></clipPath><g clip-path="url(#sp)" font-size="9px">
<text x="58.5" y="457.7" text-anchor="end" fill="#c8c8c8">30.00000</text>
<text x="953.7" y="457.7" fill="#000" stroke="#000" stroke-width=".25">30.00000</text>
<text x="58.5" y="540.7" text-anchor="end" fill="#c8c8c8">20.00000</text>
<text x="953.7" y="540.7" fill="#000" stroke="#000" stroke-width=".25">20.00000</text>
<text x="58.5" y="623.7" text-anchor="end" fill="#c8c8c8">10.00000</text>
<text x="953.7" y="623.7" fill="#000" stroke="#000" stroke-width=".25">10.00000</text>
<text x="58.5" y="706.7" text-anchor="end" fill="#c8c8c8">0.00000</text>
<text x="953.7" y="706.7" fill="#000" stroke="#000" stroke-width=".25">0.00000</text>
</g>
<text x="62.6" y="717.8" text-anchor="middle" font-size="11.5px" letter-spacing="-.35" fill="#000">50</text>
<text x="113.6" y="717.8" text-anchor="middle" font-size="11.5px" letter-spacing="-.35" fill="#000">2.7k</text>
<text x="164.7" y="717.8" text-anchor="middle" font-size="11.5px" letter-spacing="-.35" fill="#000">5.5k</text>
<text x="215.7" y="717.8" text-anchor="middle" font-size="11.5px" letter-spacing="-.35" fill="#000">8.2k</text>
<text x="266.7" y="717.8" text-anchor="middle" font-size="11.5px" letter-spacing="-.35" fill="#000">11.0k</text>
<text x="317.8" y="717.8" text-anchor="middle" font-size="11.5px" letter-spacing="-.35" fill="#000">13.7k</text>
<text x="368.8" y="717.8" text-anchor="middle" font-size="11.5px" letter-spacing="-.35" fill="#000">16.5k</text>
<text x="419.8" y="717.8" text-anchor="middle" font-size="11.5px" letter-spacing="-.35" fill="#000">19.2k</text>
<text x="470.8" y="717.8" text-anchor="middle" font-size="11.5px" letter-spacing="-.35" fill="#000">22.0k</text>
<text x="521.9" y="717.8" text-anchor="middle" font-size="11.5px" letter-spacing="-.35" fill="#000">24.7k</text>
<text x="572.9" y="717.8" text-anchor="middle" font-size="11.5px" letter-spacing="-.35" fill="#000">27.5k</text>
<text x="623.9" y="717.8" text-anchor="middle" font-size="11.5px" letter-spacing="-.35" fill="#000">30.2k</text>
<text x="675.0" y="717.8" text-anchor="middle" font-size="11.5px" letter-spacing="-.35" fill="#000">33.0k</text>
<text x="726.0" y="717.8" text-anchor="middle" font-size="11.5px" letter-spacing="-.35" fill="#000">35.7k</text>
<text x="777.0" y="717.8" text-anchor="middle" font-size="11.5px" letter-spacing="-.35" fill="#000">38.5k</text>
<text x="828.1" y="717.8" text-anchor="middle" font-size="11.5px" letter-spacing="-.35" fill="#000">41.3k</text>
<text x="879.1" y="717.8" text-anchor="middle" font-size="11.5px" letter-spacing="-.35" fill="#000">44.0k</text>
<text x="930.1" y="717.8" text-anchor="middle" font-size="11.5px" letter-spacing="-.35" fill="#000">46.8k</text>
<text x="987.3" y="717.2" font-size="12.5px" font-weight="bold" fill="#0808e8" letter-spacing="-.3">Hz</text>
<text x="10.5" y="396.5" font-size="9.5px" font-weight="bold" fill="#0000f0">%fs</text>
<text x="984.5" y="396.5" font-size="9.5px" font-weight="bold" fill="#0000f0">%fs</text>
<clipPath id="sp2"><rect x="62" y="387" width="889" height="319"/></clipPath>
<rect x="885" y="394" width="66" height="17" fill="#000"/>
<text x="886.5" y="407.7" font-size="12.5px" fill="#00e4f0" clip-path="url(#sp2)" letter-spacing="-.1">22514.65 Hz</text>
</g></svg>
<div style="left:1009px;top:407px;width:266px;height:330px;border:1px solid #898c95;background:#fff"></div>
<div style="left:1226px;top:386px;width:12px;height:21px;border:1px solid #898c95;border-bottom:none;background:linear-gradient(#f2f2f2 0,#ebebeb 48%,#dddddd 52%,#cfcfcf 100%);box-shadow:inset 1px 1px 0 #fbfbfb,inset -1px 0 0 #fbfbfb;overflow:hidden"></div>
<span class="t " style="left:1233.6px;top:389px;font-size:13px;"></span>
<div style="left:1227px;top:387px;width:10px;height:20px;overflow:hidden"><span class="t" style="left:6.6px;top:2px">Us</span></div>
<div style="left:1172px;top:386px;width:55px;height:21px;border:1px solid #898c95;border-bottom:none;background:linear-gradient(#f2f2f2 0,#ebebeb 48%,#dddddd 52%,#cfcfcf 100%);box-shadow:inset 1px 1px 0 #fbfbfb,inset -1px 0 0 #fbfbfb;overflow:hidden"></div>
<span class="t " style="left:1180.0px;top:389px;font-size:13px;">THD</span>
<div style="left:1118px;top:386px;width:55px;height:21px;border:1px solid #898c95;border-bottom:none;background:linear-gradient(#f2f2f2 0,#ebebeb 48%,#dddddd 52%,#cfcfcf 100%);box-shadow:inset 1px 1px 0 #fbfbfb,inset -1px 0 0 #fbfbfb;overflow:hidden"></div>
<span class="t " style="left:1124.5px;top:389px;font-size:13px;">Cepst</span>
<div style="left:1066px;top:386px;width:53px;height:21px;border:1px solid #898c95;border-bottom:none;background:linear-gradient(#f2f2f2 0,#ebebeb 48%,#dddddd 52%,#cfcfcf 100%);box-shadow:inset 1px 1px 0 #fbfbfb,inset -1px 0 0 #fbfbfb;overflow:hidden"></div>
<span class="t " style="left:1071.2px;top:389px;font-size:13px;">More</span>
<div style="left:1009px;top:384px;width:58px;height:24px;border:1px solid #898c95;border-bottom:none;background:#fff;border-radius:2px 2px 0 0"></div>
<span class="t " style="left:1017.6px;top:388px;font-size:13px;">Main</span>
<div style="left:1238px;top:386px;width:19px;height:18px;border:1px solid #c0c0c0;background:linear-gradient(#f8f8f8 0,#f0f0f0 50%,#e2e2e2 100%);box-shadow:inset 0 0 0 1px #fdfdfd"></div>
<svg style="left:1238px;top:386px" width="19" height="18"><path d="M11.2 5.5L7 8.7L11.2 12Z" fill="#3050d8"/></svg>
<div style="left:1257px;top:386px;width:19px;height:18px;border:1px solid #c0c0c0;background:linear-gradient(#f8f8f8 0,#f0f0f0 50%,#e2e2e2 100%);box-shadow:inset 0 0 0 1px #fdfdfd"></div>
<svg style="left:1257px;top:386px" width="19" height="18"><path d="M7.5 5.5L11.7 8.7L7.5 12Z" fill="#3050d8"/></svg>
<div style="left:1010px;top:408px;width:264px;height:322px;overflow:hidden"><div style="left:-1010px;top:-408px;width:1280px;height:761px">
<div class="grp" style="left:1013px;top:411px;width:139px;height:183px"></div>
<div class="cb " style="left:1023px;top:416px"></div>
<span class="t " style="left:1042.5px;top:417px;font-size:13px;letter-spacing:0px;">Stay on top</span>
<div class="cb " style="left:1023px;top:435px"></div>
<span class="t " style="left:1042.5px;top:436px;font-size:13px;letter-spacing:0px;">Volt meter</span>
<div class="cb " style="left:1023px;top:455px"></div>
<span class="t " style="left:1042.5px;top:456px;font-size:13px;letter-spacing:0px;">Freq. meter</span>
<div class="cb " style="left:1023px;top:475px"></div>
<span class="t " style="left:1042.5px;top:476px;font-size:13px;letter-spacing:0.5px;">Wave Gen./Rec</span>
<div class="cb " style="left:1023px;top:496px"></div>
<span class="t " style="left:1042.5px;top:497px;font-size:13px;letter-spacing:0.25px;">Phase</span>
<div class="cb " style="left:1023px;top:514px"></div>
<span class="t " style="left:1042.5px;top:515px;font-size:13px;letter-spacing:0.25px;">THD view</span>
<div class="cb " style="left:1023px;top:534px"></div>
<span class="t " style="left:1042.5px;top:535px;font-size:13px;letter-spacing:0.3px;">THD+Noise view</span>
<div class="cb " style="left:1023px;top:554px"></div>
<span class="t " style="left:1042.5px;top:555px;font-size:13px;letter-spacing:0px;">ZRLC meter</span>
<div class="cb " style="left:1023px;top:573px"></div>
<span class="t " style="left:1042.5px;top:574px;font-size:13px;letter-spacing:0.37px;">Fast Rec./Play</span>
<div class="btn" style="left:1162px;top:418px;width:107px;height:19px"></div>
<div class="t" style="left:1162px;width:107px;top:420px;text-align:center">Capture scope</div>
<div class="btn" style="left:1162px;top:442px;width:107px;height:18px"></div>
<div class="t" style="left:1162px;width:107px;top:443px;text-align:center">Capture spectrum</div>
<div class="btn" style="left:1160px;top:464px;width:71px;height:19px"></div>
<div class="t" style="left:1160px;width:71px;top:467px;text-align:center">WaveOn</div>
<div class="btn" style="left:1236px;top:464px;width:33px;height:19px"></div>
<div class="t" style="left:1236px;width:33px;top:467px;text-align:center">Info</div>
<div class="grp" style="left:1161px;top:490px;width:109px;height:105px"></div>
<span class="t " style="left:1182.3px;top:506px;font-size:13px;">wait</span>
<div class="inp3" style="left:1220px;top:502px;width:41px;height:24px"></div>
<span class="t " style="left:1223.4px;top:506px;font-size:12.5px;letter-spacing:-.3px;">218</span>
<span class="t " style="left:1182.3px;top:535px;font-size:13px;">req.</span>
<div class="inp3" style="left:1220px;top:531px;width:41px;height:24px"></div>
<span class="t " style="left:1223.4px;top:534px;font-size:12.5px;letter-spacing:-.3px;">-7</span>
<span class="t " style="left:1182.3px;top:564px;font-size:13px;">used</span>
<div class="inp3" style="left:1220px;top:559px;width:41px;height:24px"></div>
<span class="t " style="left:1223.4px;top:563px;font-size:12.5px;letter-spacing:-.3px;">63</span>
<div class="grp" style="left:1013px;top:604px;width:139px;height:140px"></div>
<span class="t " style="left:1019.2px;top:597px;font-size:13px;background:#fff;padding:0 2px;">Y - axis</span>
<div style="left:1036px;top:622px;width:8px;height:120px;border-left:1px solid #b4b4b4;border-top:1px solid #b4b4b4;background:#e6e9ea"></div>
<div style="left:1033px;top:663px;width:14px;height:7px;border:1px solid #7c7c7c;border-radius:2px;background:linear-gradient(#fdfdfd,#d0d0d0)"></div>
<div style="left:1028px;top:625px;width:4px;height:1px;background:#c0c0c0"></div><div style="left:1049px;top:625px;width:4px;height:1px;background:#c0c0c0"></div>
<div style="left:1028px;top:651px;width:4px;height:1px;background:#c0c0c0"></div><div style="left:1049px;top:651px;width:4px;height:1px;background:#c0c0c0"></div>
<div style="left:1028px;top:677px;width:4px;height:1px;background:#c0c0c0"></div><div style="left:1049px;top:677px;width:4px;height:1px;background:#c0c0c0"></div>
<div style="left:1028px;top:704px;width:4px;height:1px;background:#c0c0c0"></div><div style="left:1049px;top:704px;width:4px;height:1px;background:#c0c0c0"></div>
<div class="cb " style="left:1082px;top:612px"></div>
<span class="t " style="left:1101.6px;top:613px;font-size:13.3px;">Log</span>
<div class="cb " style="left:1082px;top:635px"></div>
<span class="t " style="left:1101.6px;top:635px;font-size:13.3px;">Hold</span>
<div class="cb dis" style="left:1082px;top:658px"></div>
<svg style="left:1082px;top:658px" width="16" height="16"><path d="M4 8L6.8 12L12 3" stroke="#b4b4b4" stroke-width="2" fill="none"/></svg>
<span class="t dis" style="left:1101.6px;top:658px;font-size:13.3px;">Lines</span>
<div class="cb " style="left:1082px;top:679px"></div>
<span class="t " style="left:1101.6px;top:680px;font-size:13.3px;">Info</span>
<span class="t " style="left:1072.1px;top:698px;font-size:13.3px;">Average</span>
<div class="btn" style="left:1072px;top:714px;width:70px;height:23px"></div>
<span class="t " style="left:1076.7px;top:720px;font-size:13.3px;">5</span>
<svg style="left:1127px;top:724px" width="10" height="6"><path d="M0 0H10L5 5.5Z" fill="#000"/></svg>
<div class="grp" style="left:1161px;top:604px;width:109px;height:122px"></div>
<span class="t " style="left:1166.4px;top:597px;font-size:13px;background:#fff;padding:0 2px;">X - axis</span>
<div class="cb " style="left:1171px;top:615px"></div>
<span class="t " style="left:1190.5px;top:616px;font-size:13.3px;">Log</span>
<div class="cb " style="left:1226px;top:615px"></div>
<span class="t " style="left:1245.6px;top:616px;font-size:13.3px;">3D</span>
<div class="cb " style="left:1171px;top:637px"></div>
<span class="t " style="left:1190.0px;top:638px;font-size:13.3px;">true X</span>
<div class="btn" style="left:1171px;top:657px;width:90px;height:23px"></div>
<span class="t " style="left:1175.4px;top:660px;font-size:13.3px;">Fit screen</span>
<svg style="left:1245px;top:666px" width="10" height="6"><path d="M0 0H10L5 5.5Z" fill="#000"/></svg>
<div style="left:1171px;top:690px;width:90px;height:24px;border:1px solid #b8bcc0;border-radius:3px;background:#f4f4f4;box-shadow:inset 0 0 0 1px #fcfcfc"></div>
<span class="t " style="left:1175.4px;top:695px;font-size:13.3px;color:#9a9a9a;">1/1</span>
<svg style="left:1245px;top:700px" width="10" height="6"><path d="M0 0H10L5 5.5Z" fill="#8a8a8a"/></svg>
</div></div>
<div style="left:1px;top:730px;width:1278px;height:22px;background:#f0f0f0;border-top:1px solid #a0a0a0"></div>
<div style="left:1px;top:731px;width:1278px;height:1px;background:#fff"></div>
<span class="t " style="left:3.8px;top:734px;font-size:14.85px;font-style:italic;letter-spacing:0px;">[Points = 32768]</span>
<span class="t " style="left:120.0px;top:734px;font-size:14.8px;font-style:italic;letter-spacing:0px;">[Sampling = 96000Hz]</span>
<span class="t " style="left:274.3px;top:734px;font-size:14.85px;font-style:italic;letter-spacing:0px;">[Smoothing = Hanning]</span>
<span class="t " style="left:434.4px;top:734px;font-size:14.65px;font-style:italic;letter-spacing:0px;">[Ini = C:\Program Files\Visual Analyser\VA.ini]</span>
<span class="t " style="left:739.2px;top:734px;font-size:14.5px;font-style:italic;letter-spacing:-0.43px;">[UID = 4BCEA4329EE3B30A28DE8B5AFC376846]</span>
<div style="left:0;top:752px;width:1280px;height:9px;background:linear-gradient(#7fa9e2 0,#4a8ad8 25%,#2a6cc8 60%,#1e5fb8 100%)"></div>
<div style="left:17px;top:753px;width:30px;height:14px;border-radius:15px 15px 0 0;background:#9fb8d8;border:1px solid #c8d8ec"></div>
<div style="left:86px;top:756px;width:36px;height:5px;border-radius:3px 3px 0 0;background:#f4f6fa"></div>
<div style="left:158px;top:755px;width:18px;height:6px;border-radius:2px 2px 0 0;background:#e8c040"></div>
<div style="left:233px;top:756px;width:20px;height:8px;border-radius:10px 10px 0 0;background:#e03828"></div>
<div style="left:281px;top:752px;width:67px;height:9px;border:1px solid #c4d8f0;border-bottom:none;border-radius:3px 3px 0 0;background:linear-gradient(#b8d0f0,#8cb4e8)"></div>
<div style="left:295px;top:754px;width:39px;height:7px;border:1px solid #20e020;background:#185018"></div>
<svg style="left:295px;top:754px" width="39" height="7" shape-rendering="crispEdges"><path d="M4.5 0V7M9.5 0V7M14.5 0V7M19.5 0V7M24.5 0V7M29.5 0V7" stroke="#20e020"/><rect x="32" y="1" width="4" height="4" fill="#e03020"/></svg>
<div style="left:0;top:0;width:1280px;height:1px;background:#ff0000"></div>
<div style="left:0;top:0;width:1px;height:761px;background:#ff0000"></div>
<div style="left:1279px;top:0;width:1px;height:761px;background:#ff0000"></div>
<div style="left:0;top:760px;width:1280px;height:1px;background:#ff0000"></div>
</body></html>
